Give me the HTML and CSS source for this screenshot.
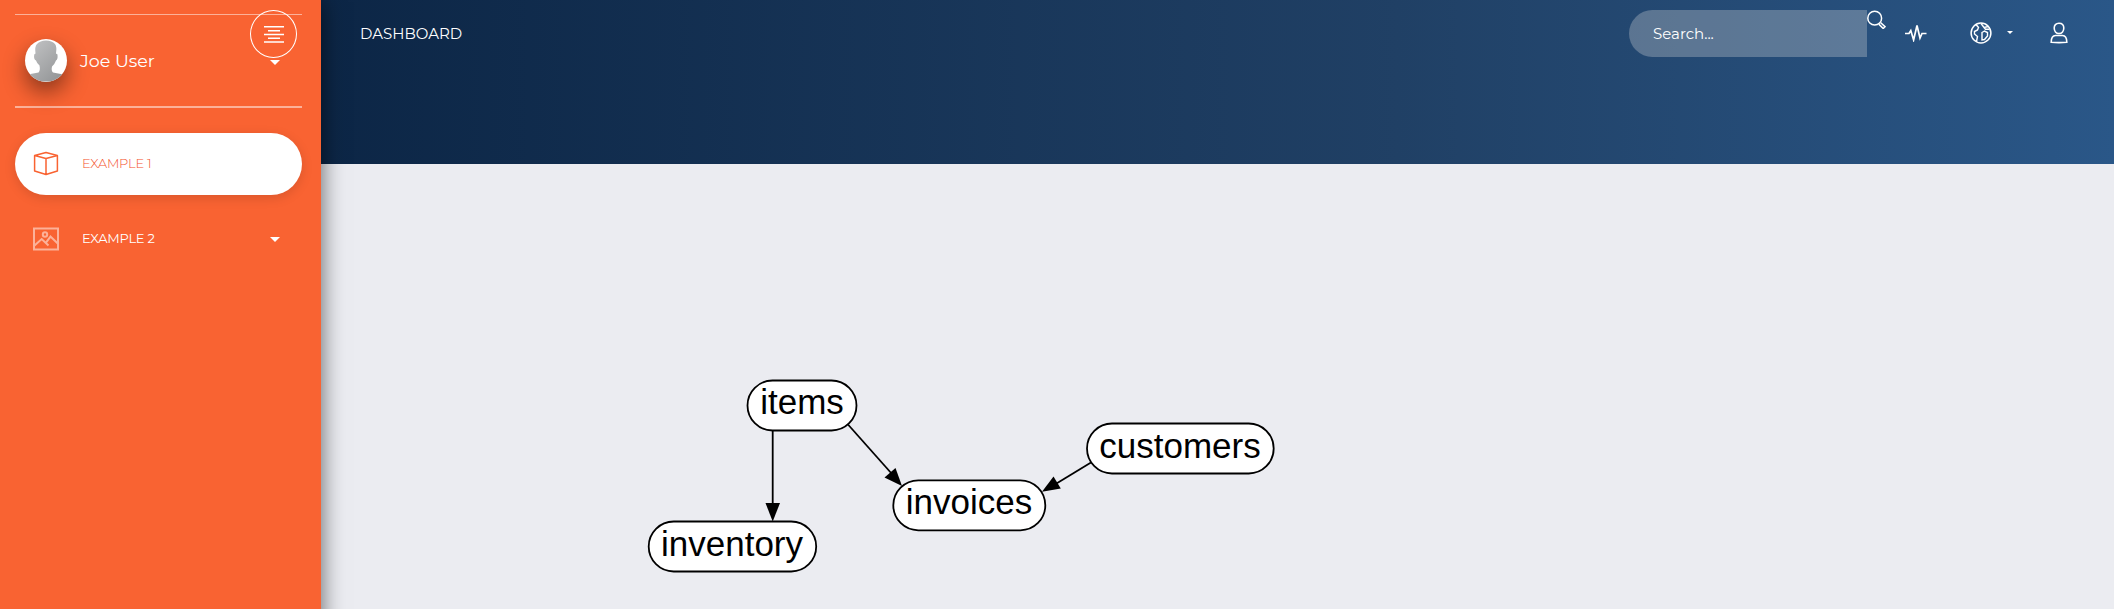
FILE: index.html
```html
<!DOCTYPE html>
<html lang="en">
<head>
<meta charset="utf-8">
<title>Dashboard</title>
<link rel="stylesheet" href="styles.css">
</head>
<body>
<div class="layout">
  <aside class="sidebar">
    <button class="toggle" aria-label="Toggle sidebar">
      <svg width="20" height="17" viewBox="0 0 20 17" stroke="#fff" fill="none"><path d="M0 .8H20M4 4.7H16M0 8.500H20M4 12.300H16M0 16H20" stroke-width="1.500"/></svg>
    </button>
    <div class="user">
      <svg class="avatar" viewBox="0 0 42 42">
        <defs>
          <linearGradient id="skin" x1="0" y1="0" x2="1" y2="1"><stop offset="0" stop-color="#c6c7c8"/><stop offset="1" stop-color="#8d8f91"/></linearGradient>
        </defs>
        <path fill="url(#skin)" d="M0 42V35.500Q7 34 13.500 33Q15.500 31 14.500 26Q12 24 11 21Q8.500 20 9.200 15L10.500 14Q9.500 7 12 4.500Q15 1 21 1Q27 1 30 4.500Q32 7 31 14L32.500 15Q33 20 31 21Q30 24 27 27Q26 31 28 33Q34 34 42 35.500V42Z"/>
      </svg>
      <span class="user-name">Joe User</span>
      <b class="caret"></b>
    </div>
    <nav class="menu">
      <a class="menu-item active">
        <svg class="menu-icon" viewBox="0 0 26 26" fill="none" stroke="#f96332" stroke-width="1.500" stroke-linejoin="round"><path d="M1.600 4.500L13 1.500L24.400 4.500V20L13 23.500L1.600 20ZM1.600 4.500L13 7.500L24.400 4.500M13 7.500V23.500"/></svg>
        <span class="label">EXAMPLE 1</span>
      </a>
      <a class="menu-item">
        <svg class="menu-icon dim" viewBox="0 0 26 26" fill="none" stroke="#fff" stroke-width="2"><path d="M1 2.500H25V23.500H1ZM1.500 19.500L8.700 13L15.500 19.500M12.800 16.800L17.500 10.600L25 17.800"/><circle cx="12" cy="8.500" r="2.200"/></svg>
        <span class="label">EXAMPLE 2</span>
        <b class="caret"></b>
      </a>
    </nav>
  </aside>
  <main class="main">
    <header class="header">
      <span class="brand">DASHBOARD</span>
      <div class="tools">
        <div class="search">Search...</div>
        <svg class="icon-search" width="19" height="19" viewBox="0 0 19 19" fill="none" stroke="#fff" stroke-width="1.500"><circle cx="7.700" cy="8.200" r="6.900"/><path d="M13.500 12.500L18 16.700L16.200 18.500L11.800 14.100"/></svg>
        <svg class="icon-pulse" width="22" height="18" viewBox="0 0 22 18" fill="none" stroke="#fff" stroke-width="1.700"><path d="M0 9.500H4L5.800 6.500L8.600 16L12 1.500L15 14L17 9.500H21.500"/></svg>
        <svg class="icon-globe" width="22" height="22" viewBox="0 0 22 22" fill="none" stroke="#fff" stroke-width="1.500"><circle cx="11" cy="11" r="9.900"/><path d="M6 2.500L8.500 5.500L7.500 8L4.500 9.500L4.500 12L7.500 14.500L6.500 19.500M11 1.500L14 5.500L18.500 4.500M14 5.500L15.500 7.300L19.500 7.300M12 10.500L14.500 9L17.500 10.500V14L14.500 17.500L12 18Z" stroke-width="1.400"/></svg>
        <b class="caret small"></b>
        <svg class="icon-user" width="18" height="22" viewBox="0 0 18 22" fill="none" stroke="#fff" stroke-width="1.600"><path d="M9 1.200C12.200 1.200 13.800 3.300 13.800 6C13.800 9 12 11.500 9 11.500S4.200 9 4.200 6C4.200 3.300 5.800 1.200 9 1.200ZM1.200 20.300C1.200 16 2.500 13.500 5.500 13.500H12.500C15.500 13.500 16.800 16 16.800 20.300Q9 21 1.200 20.300Z"/></svg>
      </div>
    </header>
    <section class="content">
      <svg class="graph" viewBox="321 164 1793 445">
        <g class="edges">
          <path d="M772.700 430V510"/>
          <path d="M848 424.500L892 474"/>
          <path d="M1091 462.500L1054 485"/>
        </g>
        <path d="M765.500 503H780L772.700 521.500Z"/>
        <path d="M884.500 477.500L895.500 468L902 486Z"/>
        <path d="M1053.500 476.500L1060.800 488.500L1042 491.800Z"/>
        <g class="nodes">
          <rect x="747.500" y="380.500" width="109" height="50" rx="25"/>
          <rect x="648.700" y="521.500" width="167.500" height="50" rx="25"/>
          <rect x="893.300" y="480.300" width="152" height="50" rx="25"/>
          <rect x="1087" y="423.500" width="186.700" height="50" rx="25"/>
        </g>
        <g class="names">
          <text x="802" y="413.700">items</text>
          <text x="732" y="555.700">inventory</text>
          <text x="969" y="514">invoices</text>
          <text x="1180" y="457.700">customers</text>
        </g>
      </svg>
    </section>
  </main>
</div>
</body>
</html>
```
FILE: styles.css
```css
* { box-sizing: border-box; }
body { margin: 0; font-family: Montserrat, Inter, sans-serif; color: #fff; }
.layout { display: flex; width: 100%; height: 609px; overflow: hidden; }
.sidebar { position: relative; z-index: 1; flex: none; width: 321px; height: 660px; padding: 14px 19px 0 15px; background: #f96332; box-shadow: 0 2px 22px 0 rgba(0,0,0,.6); }
.toggle { position: absolute; left: 250px; top: 10px; width: 47px; height: 48px; padding: 0; border: 1px solid #fff; border-radius: 50%; background: none; display: flex; align-items: center; justify-content: center; }
.user { display: flex; align-items: center; height: 94px; padding: 0 22px 0 10px; border-top: 1px solid rgba(255,255,255,.5); border-bottom: 2px solid rgba(255,255,255,.5); }
.avatar { width: 42px; height: 43px; border-radius: 50%; background: #fff; box-shadow: 0 10px 22px rgba(0,0,0,.45); }
.user-name { margin-left: 13px; font-size: 17.500px; }
.caret { margin-left: auto; border: 5px solid transparent; border-top-color: #fff; border-bottom: 0; }
.user .caret { margin-top: 4px; }
.menu { display: flex; flex-direction: column; gap: 13px; margin-top: 25px; }
.menu-item { display: flex; align-items: center; height: 62px; padding: 0 22px 0 18px; font-size: 13px; border-radius: 31px; }
.active { background: #fff; color: #f4512c; font-weight: 300; box-shadow: 0 3px 12px rgba(0,0,0,.13); }
.menu-icon { width: 26px; height: 26px; margin: -1px 23px 0 0; }
.label { margin-top: -3px; letter-spacing: -.25px; }
.dim { opacity: .5; }
.main { flex: 1; display: flex; flex-direction: column; min-width: 0; }
.header { display: flex; justify-content: space-between; align-items: flex-start; height: 164px; flex: none; padding: 10px 46px 0 39px; background: linear-gradient(90deg, #0c2646 0%, #204065 60%, #2a5788 100%); }
.brand { height: 47px; line-height: 47px; font-size: 15px; }
.tools { display: flex; align-items: flex-start; }
.search { width: 238px; height: 47px; line-height: 47px; padding-left: 24px; border-radius: 24px 0 0 24px; background: rgba(222,222,222,.3); font-size: 15px; }
.icon-pulse { margin: 14px 0 0 19px; }
.icon-globe { margin: 12px 0 0 43px; }
.small { margin: 21px 0 0 15px; border-width: 3px 3px 0; }
.icon-user { margin: 12px 0 0 37px; }
.content { flex: 1; background: #ebecf1; }
.graph { display: block; width: 1793px; height: 445px; }
.edges { stroke: #000; stroke-width: 1.800; }
.nodes { fill: #fff; stroke: #000; stroke-width: 1.800; }
.names { font: 35px "Liberation Sans", Arial, sans-serif; fill: #000; text-anchor: middle; }
```
